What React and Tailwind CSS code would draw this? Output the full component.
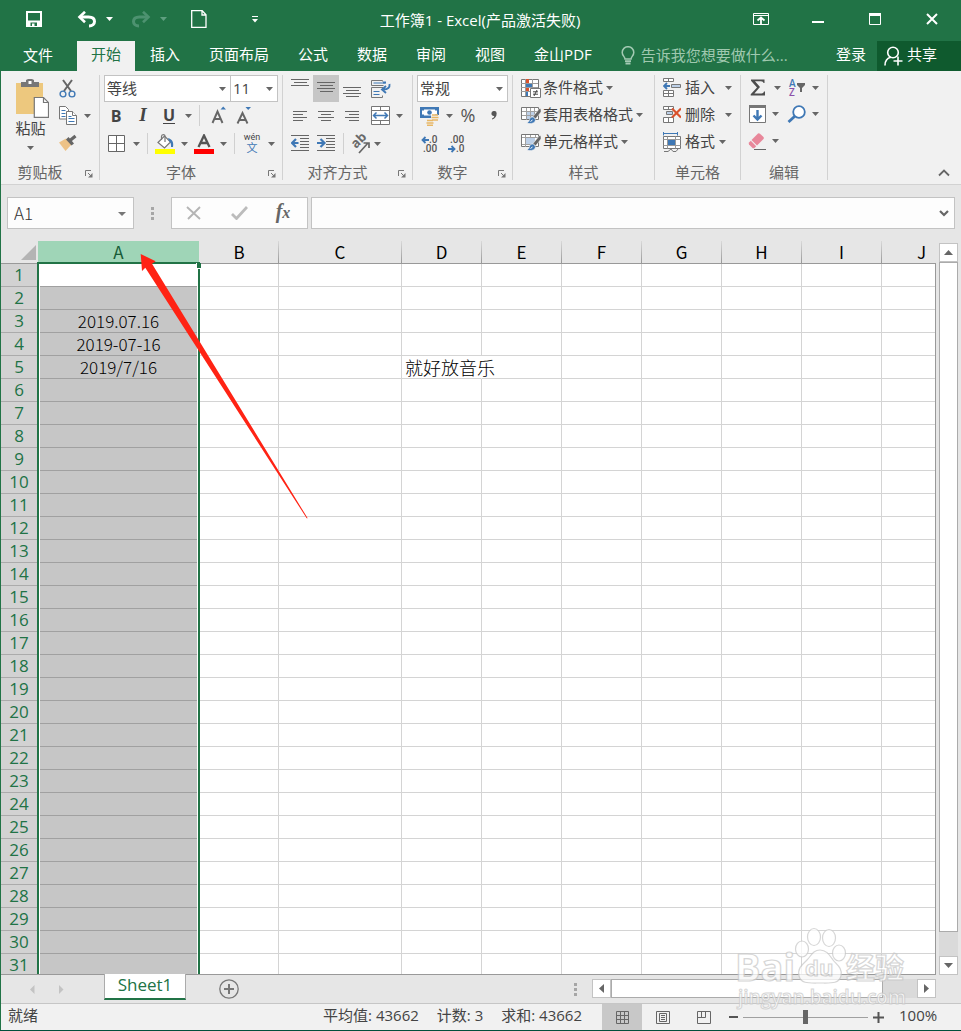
import React from "react";

const UI = "font-['Open_Sans','Noto_Sans_CJK_SC',sans-serif]";

function Caret({ className = "w-4", color = "#666666", label = "更多选项" }) {
  return (
    <button aria-label={label} className={"flex h-full shrink-0 items-center justify-center " + className}>
      <svg width="7" height="4" viewBox="0 0 7 4">
        <path d="M0 0h7L3.5 4z" fill={color} />
      </svg>
    </button>
  );
}

function Tool({ label, className = "w-[26px]", children }) {
  return (
    <button aria-label={label} title={label} className={"flex h-full shrink-0 items-center justify-center " + className}>
      {children}
    </button>
  );
}

function Row({ className = "", children }) {
  return <div className={"flex h-[27px] items-center " + className}>{children}</div>;
}

function Divider({ className = "mx-1" }) {
  return <div className={"h-[21px] w-px shrink-0 bg-[#d0d0d0] " + className} />;
}

function Group({ label, launcher, className, pad = "", children }) {
  return (
    <section aria-label={label} className={"flex shrink-0 flex-col border-r border-[#d2d2d2] " + className}>
      <div className={"h-[81px] " + pad}>{children}</div>
      <div className="flex h-6 items-end">
        <div className="flex-1 text-center text-[15px] leading-4 text-[#666666]">{label}</div>
        {launcher && (
          <button aria-label={label + "设置"} className="flex h-3 w-5 items-center justify-center">
            <svg width="8" height="8" viewBox="0 0 8 8" fill="none" stroke="#777777">
              <path d="M.5 6V.5H6M3 3l3.5 3.5" />
              <path d="M7.5 3v4.5H3z" fill="#777777" stroke="none" />
            </svg>
          </button>
        )}
      </div>
    </section>
  );
}

function Combo({ label, value, className }) {
  return (
    <div className={"relative h-[27px] border border-[#c3c3c3] bg-white " + className}>
      <select aria-label={label} className="h-full w-full appearance-none bg-transparent pl-[2px] text-[15px] text-[#444444]">
        <option>{value}</option>
      </select>
      <svg className="pointer-events-none absolute right-1 top-[11px]" width="7" height="4" viewBox="0 0 7 4">
        <path d="M0 0h7L3.5 4z" fill="#666666" />
      </svg>
    </div>
  );
}

/* Text line icons: each entry is [x1, x2, y] inside an 18 x 27 box. */
function Lines({ lines, children }) {
  return (
    <svg width="18" height="27" viewBox="0 0 18 27">
      {lines.map(([a, b, y]) => (
        <path key={y} d={`M${a} ${y + 0.5}H${b}`} stroke="#666666" />
      ))}
      {children}
    </svg>
  );
}

function TableBrush({ header }) {
  return (
    <svg width="20" height="20" viewBox="0 0 20 20">
      <path d="M.5 2.500h17v12H.5z" fill="#fff" stroke="#777777" />
      {header ? (
        <g>
          <path d="M5 6h9v6H5z" fill="#bdd0e8" />
          <path d="M1 5.500h16M1 12.500h12M4.500 3v3M9.500 3v3M14.500 3v3M4.500 12v3M9.500 12v3M4.500 6v6" stroke="#a0a0a0" fill="none" />
        </g>
      ) : (
        <g>
          <path d="M6 6h8v8H6z" fill="#bdd0e8" />
          <path d="M1 6.500h16M1 10.500h14M5.500 3v12M9.500 3v12M13.500 3v12" stroke="#a0a0a0" fill="none" />
        </g>
      )}
      <path d="M20 4l-1.500-.5-6.500 8 2.500 2.500 5.500-7z" fill="#666666" stroke="#f0f0f0" strokeWidth=".6" />
      <path d="M12.500 12.300c-2-.8-3.700.4-4 2.200-.2 1.600-1 2.800-2.800 3.600 3 .9 6.700.6 8.300-1.600.9-1.400.1-3.300-1.500-4.200z" fill="#3f78b5" stroke="#f0f0f0" strokeWidth=".6" />
      <path d="M9.500 16.500l2-1.500" stroke="#fff" />
    </svg>
  );
}

function TitleBar() {
  return (
    <header className="flex h-[41px] items-center bg-[#217346] text-white">
      <div className="flex h-full min-w-0 flex-1 items-center pb-[3px]">
        <Tool label="保存" className="ml-[18px] w-8">
          <svg width="16" height="16" viewBox="0 0 16 16">
            <path d="M1 1h14v14H1z" fill="none" stroke="#fff" strokeWidth="2" />
            <path d="M1 9.500h14V15H1z" fill="#fff" />
            <path d="M4.500 11.500H11V15H4.500z" fill="#217346" />
            <path d="M6 12.500h2.500V15H6z" fill="#fff" />
          </svg>
        </Tool>
        <Tool label="撤消" className="ml-[21px] w-8">
          <svg width="20" height="17" viewBox="0 0 20 17" fill="none" stroke="#fff">
            <path d="M3 6h8.500c4 0 6 2 6 4.500S15.500 15 12 15" strokeWidth="3" />
            <path d="M8 .8L2.500 6 8 11.200" strokeWidth="2.600" />
          </svg>
        </Tool>
        <Caret className="w-3" color="#ffffff" label="撤消列表" />
        <Tool label="恢复" className="ml-[10px] w-8">
          <svg width="20" height="17" viewBox="0 0 20 17" fill="none" stroke="#4d9270">
            <path d="M17 6H8.500c-4 0-6 2-6 4.500S4.500 15 8 15" strokeWidth="3" />
            <path d="M12 .8L17.500 6 12 11.200" strokeWidth="2.600" />
          </svg>
        </Tool>
        <Caret className="w-3" color="#5f9f80" label="恢复列表" />
        <Tool label="新建" className="ml-[14px] w-8">
          <svg width="16" height="18" viewBox="0 0 16 18" fill="none" stroke="#fff" strokeWidth="1.300">
            <path d="M.7.700h10.500L15 4.700v12.600H.7zM11 1v4h4" />
          </svg>
        </Tool>
        <Tool label="自定义快速访问工具栏" className="ml-6 w-8">
          <svg width="6" height="8" viewBox="0 0 6 8">
            <path d="M0 1.500h6" stroke="#fff" />
            <path d="M0 4h6L3 7.500z" fill="#fff" />
          </svg>
        </Tool>
      </div>
      <h1 className="text-[15px]">工作簿1 - Excel(产品激活失败)</h1>
      <div className="flex h-full flex-1 items-center justify-end pb-[3px] pr-px">
        <Tool label="功能区显示选项" className="w-[57px]">
          <svg width="16" height="12" viewBox="0 0 16 12" fill="none" stroke="#fff">
            <path d="M.5.5h15v11H.5zM0 2.500h16" />
            <path d="M8 11V5M4.500 7.500L8 4.500l3.500 3" strokeWidth="1.800" />
          </svg>
        </Tool>
        <Tool label="最小化" className="w-[57px]">
          <svg width="12" height="12" viewBox="0 0 12 12">
            <path d="M0 8h12v2H0z" fill="#fff" />
          </svg>
        </Tool>
        <Tool label="最大化" className="w-[57px]">
          <svg width="12" height="12" viewBox="0 0 12 12">
            <path d="M.5.5h11v11H.5z" fill="none" stroke="#fff" />
            <path d="M0 0h12v3H0z" fill="#fff" />
          </svg>
        </Tool>
        <Tool label="关闭" className="w-[57px]">
          <svg width="12" height="12" viewBox="0 0 12 12">
            <path d="M1 1l10 10M11 1L1 11" stroke="#fff" strokeWidth="2" />
          </svg>
        </Tool>
      </div>
    </header>
  );
}

const TABS = ["开始", "插入", "页面布局", "公式", "数据", "审阅", "视图", "金山PDF"];

function TabBar() {
  return (
    <nav className="flex h-[30px] items-stretch gap-px overflow-hidden bg-[#217346] text-[15px] text-white">
      <button className="w-[76px] shrink-0 pb-px">文件</button>
      {TABS.map((t, i) => (
        <button key={t} className={"shrink-0 px-[14px] pb-1 " + (i === 0 ? "bg-[#f1f1f1] text-[#217346]" : "")}>
          {t}
        </button>
      ))}
      <label className="ml-[14px] flex min-w-0 flex-1 items-center gap-[6px]">
        <svg className="shrink-0" width="14" height="20" viewBox="0 0 14 20" fill="none" stroke="#a3cab3" strokeWidth="1.500">
          <path d="M4 13c0-2.200-2.800-3.300-2.800-6.500a5.800 5.800 0 0 1 11.600 0C12.800 9.700 10 10.800 10 13z" />
          <path d="M4 15.200h6M4.500 17.500h5" strokeWidth="1.800" />
        </svg>
        <input aria-label="操作说明搜索" placeholder="告诉我您想要做什么..." className="w-full min-w-0 bg-transparent pb-px placeholder:text-[#9fc8af]" />
      </label>
      <button className="w-[50px] shrink-0 pb-1">登录</button>
      <button className="flex w-[84px] shrink-0 items-center gap-1 bg-[#0f5a2e] pb-1 pl-[7px]">
        <svg className="mt-1" width="19" height="20" viewBox="0 0 19 20" fill="none" stroke="#fff" strokeWidth="1.600">
          <circle cx="9" cy="6.500" r="5.300" />
          <path d="M1 19.500c0-4.500 2.500-7.500 6-8.200M9.500 15h9M14 10.500v9" />
        </svg>
        共享
      </button>
    </nav>
  );
}

function Ribbon() {
  return (
    <div className="flex overflow-hidden border-b border-[#d2d2d2] bg-[#f1f1f1] py-1 text-[#444444]">
      <Group label="剪贴板" launcher className="w-[99px]">
        <div className="flex">
          <button className="flex w-[59px] flex-col items-center pt-[3px] text-[15px] leading-5">
            <svg width="36" height="40" viewBox="0 0 36 40">
              <path d="M3 5h27v31H3z" fill="#edc87e" />
              <path d="M8 4h5V2l2-1h4l2 1v2h5v5H8z" fill="#777777" />
              <path d="M15.500 3h3v3h-3z" fill="#fff" />
              <path d="M21.300 19.500h9.200l5 5v14.900H21.300z" fill="#fff" stroke="#777777" strokeWidth="1.200" />
              <path d="M30.500 19.500v5h5" fill="none" stroke="#777777" strokeWidth="1.200" />
            </svg>
            粘贴
            <svg className="mt-2 shrink-0" width="7" height="4" viewBox="0 0 7 4">
              <path d="M0 0h7L3.500 4z" fill="#666666" />
            </svg>
          </button>
          <div>
            <Row>
              <Tool label="剪切" className="w-4">
                <svg className="shrink-0" width="18" height="20" viewBox="0 0 18 20" fill="none">
                  <path d="M4 1l8 11M13 1L5 12" stroke="#666666" strokeWidth="2" />
                  <circle cx="4" cy="15" r="2.900" stroke="#3f78b5" strokeWidth="1.400" />
                  <circle cx="13" cy="15" r="2.900" stroke="#3f78b5" strokeWidth="1.400" />
                </svg>
              </Tool>
            </Row>
            <Row>
              <Tool label="复制" className="w-4">
                <svg className="shrink-0" width="18" height="19" viewBox="0 0 18 19" fill="#fff" stroke="#777777">
                  <path d="M.5.500h6l3 3v9.500h-9z" />
                  <path d="M2.500 4.500h4M2.500 7.500h4M2.500 10.500h4" stroke="#3f78b5" />
                  <path d="M7.500 5.500h6l4 4v9h-10z" />
                  <path d="M13.500 5.500v4h4" />
                  <path d="M9.500 10.500h3M9.500 12.500h6M9.500 15.500h6" stroke="#3f78b5" />
                </svg>
              </Tool>
              <Caret className="w-[22px]" />
            </Row>
            <Row>
              <Tool label="格式刷" className="w-4">
                <svg className="shrink-0" width="18" height="17" viewBox="0 0 18 17">
                  <path d="M0 8.500L7 4.500l5.500 6-6 6.500z" fill="#edc287" />
                  <path d="M7 5.500l2.500-2.500 5.500 6.500-2.500 2z" fill="#666666" />
                  <path d="M11 6.500L16.500 2" stroke="#666666" strokeWidth="3.200" />
                </svg>
              </Tool>
            </Row>
          </div>
        </div>
      </Group>

      <Group label="字体" launcher className="w-[183px]" pad="pl-1">
        <Row>
          <Combo label="字体名称" value="等线" className="w-[127px]" />
          <Combo label="字号" value="11" className="w-[47px] border-l-0" />
        </Row>
        <Row>
          <Tool label="加粗" className="w-6"><b className="text-[16px]">B</b></Tool>
          <Tool label="倾斜" className="w-[30px]"><b className="font-['Liberation_Serif',serif] text-[19px] italic">I</b></Tool>
          <Tool label="下划线" className="w-[22px]"><span className="border-b border-[#444444] text-[16px] font-bold leading-4">U</span></Tool>
          <Caret className="w-4" />
          <Divider className="ml-[3px] mr-[6px]" />
          <Tool label="增大字号">
            <svg width="18" height="20" viewBox="0 0 18 20" fill="none" stroke="#666666">
              <path d="M2.500 17L7.500 5.500l5 11.500M4.500 13h6" strokeWidth="1.900" />
              <path d="M10.500 3.500h5.500L13.200.5z" fill="#3f78b5" stroke="none" />
            </svg>
          </Tool>
          <Tool label="减小字号">
            <svg width="18" height="20" viewBox="0 0 18 20" fill="none" stroke="#666666">
              <path d="M1.500 17.500L6.500 7l5 10.500M3.500 14h6" strokeWidth="1.900" />
              <path d="M9.500 1h5.500L12.200 4z" fill="#3f78b5" stroke="none" />
            </svg>
          </Tool>
        </Row>
        <Row className="pt-[2px]">
          <Tool label="边框" className="w-6">
            <svg width="17" height="17" viewBox="0 0 17 17" fill="#fff" stroke="#666666">
              <path d="M.5.500h16v16H.5zM8.500 0v17M0 8.500h17" />
            </svg>
          </Tool>
          <Caret className="w-4" />
          <Divider className="ml-[3px] mr-[5px]" />
          <Tool label="填充颜色" className="w-6">
            <svg width="22" height="20" viewBox="0 0 22 20">
              <path d="M4 8.500L10.500 2l6 6-6 6z" fill="#fff" stroke="#777777" strokeWidth="1.200" />
              <path d="M7.500 6V2.500Q7.500.6 9.300.6T11 2.500V8" fill="none" stroke="#777777" strokeWidth="1.200" />
              <path d="M14 4c4 1 6 4 5 9h-2c.3-3-.5-5-2-6z" fill="#3f78b5" />
              <path d="M1 15h20v5H1z" fill="#ffff00" />
            </svg>
          </Tool>
          <Caret className="w-[14px]" />
          <Tool label="字体颜色" className="w-[26px]">
            <svg width="20" height="20" viewBox="0 0 20 20">
              <path d="M4.500 13L10 1.500 15.500 13M6.500 9h7" fill="none" stroke="#555555" strokeWidth="2.300" />
              <path d="M0 15h20v5H0z" fill="#ff0000" />
            </svg>
          </Tool>
          <Caret className="w-3" />
          <Divider className="mx-[5px]" />
          <Tool label="显示拼音" className="w-6 flex-col">
            <span className="font-['Roboto',sans-serif] text-[9px] leading-[9px]">wén</span>
            <span className="text-[11px] leading-[12px] text-[#3f78b5]">文</span>
          </Tool>
          <Caret className="w-[14px]" />
        </Row>
      </Group>

      <Group label="对齐方式" launcher className="w-[130px]" pad="pl-1">
        <Row>
          <Tool label="顶端对齐"><Lines lines={[[0, 18, 4], [3, 16, 7], [0, 18, 10]]} /></Tool>
          <Tool label="垂直居中" className="w-[26px] bg-[#c6c6c6]"><Lines lines={[[0, 18, 7], [3, 16, 10], [0, 18, 13], [3, 16, 16]]} /></Tool>
          <Tool label="底端对齐"><Lines lines={[[0, 18, 12], [3, 16, 15], [0, 18, 18], [3, 16, 21]]} /></Tool>
          <Tool label="自动换行" className="w-8">
            <svg width="20" height="20" viewBox="0 0 20 20" fill="none" stroke="#777777">
              <path d="M11.500 2.500V1.500H.5v5h12M12 8.500H.5v10h11v-2" />
              <path d="M2.500 4h12M2.500 12.500h6M2.500 15.500h6" stroke="#3f78b5" />
              <path d="M12 3.500h3M18.500 5c.5 3.500-1.500 5.500-6 5.500M15 7l-4 3.500 4 3.500" stroke="#3f78b5" strokeWidth="1.900" />
            </svg>
          </Tool>
        </Row>
        <Row>
          <Tool label="左对齐"><Lines lines={[[2, 16, 9], [2, 12, 12], [2, 16, 15], [2, 12, 18]]} /></Tool>
          <Tool label="居中"><Lines lines={[[1, 17, 9], [4, 14, 12], [1, 17, 15], [4, 14, 18]]} /></Tool>
          <Tool label="右对齐"><Lines lines={[[2, 16, 9], [6, 16, 12], [2, 16, 15], [6, 16, 18]]} /></Tool>
          <Tool label="合并后居中" className="w-[30px]">
            <svg width="19" height="19" viewBox="0 0 19 19" fill="#fff" stroke="#777777">
              <path d="M.5.500h18v18H.5zM0 4.500h19M0 14.500h19M9.500 0v4.500M9.500 14.500V19" />
              <path d="M3 9.500h13M5.500 6.500l-3 3 3 3M13.500 6.500l3 3-3 3" fill="none" stroke="#3f78b5" strokeWidth="1.500" />
            </svg>
          </Tool>
          <Caret className="w-2" />
        </Row>
        <Row className="pt-[2px]">
          <Tool label="减少缩进量">
            <Lines lines={[[0, 18, 5], [9, 18, 8], [9, 18, 11], [9, 18, 14], [9, 18, 17], [0, 18, 20]]}>
              <path d="M7.500 13H2M5 9l-4 4 4 4" fill="none" stroke="#3f78b5" strokeWidth="2.200" />
            </Lines>
          </Tool>
          <Tool label="增加缩进量">
            <Lines lines={[[0, 18, 5], [9, 18, 8], [9, 18, 11], [9, 18, 14], [9, 18, 17], [0, 18, 20]]}>
              <path d="M0 13h6M3.500 9l4 4-4 4" fill="none" stroke="#3f78b5" strokeWidth="2.200" />
            </Lines>
          </Tool>
          <Divider className="mx-1" />
          <Tool label="方向" className="w-6">
            <svg className="overflow-visible" width="20" height="20" viewBox="0 0 20 20">
              <text transform="translate(6 15) rotate(-45)" fontSize="13" fontWeight="700" fill="#6a6a6a" fontFamily="Open Sans">ab</text>
              <path d="M9 19l9-10M13.500 9H19v5" fill="none" stroke="#666666" strokeWidth="1.700" />
            </svg>
          </Tool>
          <Caret className="w-[10px]" />
        </Row>
      </Group>

      <Group label="数字" launcher className="w-[100px]" pad="pl-1">
        <Row>
          <Combo label="数字格式" value="常规" className="w-[91px]" />
        </Row>
        <Row>
          <Tool label="会计数字格式">
            <svg width="20" height="20" viewBox="0 0 20 20">
              <path d="M0 1h19v11H0z" fill="#3f78b5" />
              <path d="M2 4.500h2v-1h11v1h2v4h-2v1H4v-1H2z" fill="#fff" />
              <circle cx="9.500" cy="6.500" r="2.300" fill="#3f78b5" />
              <path d="M11 9h8v8h-6v3H6v-7h5z" fill="#f1f1f1" />
              <path d="M12 9h6M11.500 11.500h7M12 14h6M7 14.500h6M6.500 17h7M7 19.300h6" stroke="#e8b765" strokeWidth="1.700" />
            </svg>
          </Tool>
          <Caret className="w-3" />
          <Tool label="百分比样式"><span className="text-[18px] text-[#555555]">%</span></Tool>
          <Tool label="千位分隔样式">
            <svg width="6" height="9" viewBox="0 0 6 9">
              <path d="M3 0a2.500 2.500 0 0 1 2.600 2.800C5.600 5.500 4 7.800 1 8.500V7.500C2.600 7 3.200 6 3.200 5 1.500 5.200.4 4 .4 2.600A2.500 2.500 0 0 1 3 0z" fill="#555555" />
            </svg>
          </Tool>
        </Row>
        <Row className="pt-[2px]">
          <Tool label="增加小数位数">
            <svg width="18" height="18" viewBox="0 0 18 18" fontFamily="Roboto" fontSize="10" fontWeight="500" fill="#555555">
              <path d="M8 5H2M4.500 2L1.500 5l3 3" stroke="#3f78b5" strokeWidth="1.800" fill="none" />
              <text x="8" y="8">.0</text>
              <text x="2" y="17">.00</text>
            </svg>
          </Tool>
          <Tool label="减少小数位数">
            <svg width="18" height="18" viewBox="0 0 18 18" fontFamily="Roboto" fontSize="10" fontWeight="500" fill="#555555">
              <text x="3" y="8">.00</text>
              <path d="M1 14h6M4.500 11l3 3-3 3" stroke="#3f78b5" strokeWidth="1.800" fill="none" />
              <text x="9" y="17">.0</text>
            </svg>
          </Tool>
        </Row>
      </Group>

      <Group label="样式" className="w-[142px] text-[15px]" pad="pl-2">
        <Row className="pb-[2px]">
          <button className="flex items-center gap-[2px]">
            <svg width="20" height="20" viewBox="0 0 20 20">
              <path d="M.5 1.500h17v17H.5z" fill="#fff" stroke="#777777" />
              <path d="M5 1h3v4H5zM5 9h3v4H5z" fill="#d9512c" />
              <path d="M5 5h6v4H5zM5 13h2v5H5z" fill="#3f78b5" />
              <path d="M0 5.500h17M0 9.500h17M0 13.500h17M4.500 1v17M11.500 1v17" stroke="#9a9a9a" fill="none" />
              <path d="M9.500 10.500h10v9h-10z" fill="#fff" stroke="#777777" />
              <path d="M12 13.800h5M12 16.200h5M16 12l-3 6" stroke="#444444" fill="none" />
            </svg>
            条件格式
          </button>
          <Caret className="w-[13px]" />
        </Row>
        <Row className="pb-[2px]">
          <button className="flex items-center gap-[2px]"><TableBrush />套用表格格式</button>
          <Caret className="w-[13px]" />
        </Row>
        <Row className="pb-[2px]">
          <button className="flex items-center gap-[2px]"><TableBrush header />单元格样式</button>
          <Caret className="w-[13px]" />
        </Row>
      </Group>

      <Group label="单元格" className="w-[86px] text-[15px]" pad="pl-2">
        <Row className="pb-[2px]">
          <button className="flex items-center gap-1">
            <svg width="18" height="19" viewBox="0 0 18 19" fill="#fff" stroke="#777777">
              <path d="M.5.500h10v3H.5zM5.500.500v3M.5 12.500h10v6H.5zM.5 15.500h10M5.500 12.500v6" />
              <path d="M8.500 6.500h9v3h-9z" fill="#bdd0e8" />
              <path d="M7 8H2M4 5L1 8l3 3" stroke="#3f78b5" strokeWidth="1.900" fill="none" />
            </svg>
            插入
          </button>
          <Caret className="w-[26px]" />
        </Row>
        <Row className="pb-[2px]">
          <button className="flex items-center gap-1">
            <svg width="18" height="19" viewBox="0 0 18 19" fill="#fff" stroke="#777777">
              <path d="M.5 1.500h10v3H.5zM5.500 1.500v3M.5 12.500h10v5H.5zM5.500 12.500v5" />
              <path d="M3.500 6.500h6v3h-6z" fill="#bdd0e8" />
              <path d="M9 3.500l9 9M18 3.500l-9 9" stroke="#d9512c" strokeWidth="2.200" />
            </svg>
            删除
          </button>
          <Caret className="w-[26px]" />
        </Row>
        <Row className="pb-[2px]">
          <button className="flex items-center gap-1">
            <svg width="18" height="20" viewBox="0 0 18 20" fill="#fff" stroke="#777777">
              <path d="M1 1.500h13M.5 0v3.500M14.500 0v3.500" stroke="#3f78b5" />
              <path d="M.5 4.500h17v12h-17z" />
              <path d="M.5 7.500h17M.5 13.500h17M4.500 4.500v12M12.500 4.500v12" stroke="#9a9a9a" />
              <path d="M5 8h7v5H5z" fill="#3f78b5" stroke="none" />
              <path d="M1 19.500h4l3-2.500 2 2.500h3l2-2.500" fill="none" />
            </svg>
            格式
          </button>
          <Caret className="w-[14px]" />
        </Row>
      </Group>

      <Group label="编辑" className="w-[87px]" pad="pl-1">
        <Row className="pb-[2px]">
          <Tool label="自动求和">
            <svg width="16" height="17" viewBox="0 0 16 17">
              <path d="M1 .500h13.500V4h-1Q13.300 2.300 11 2.300H5l5 5.700-5.600 6.400H11.500Q13.700 14.400 14 12.400h1v4.100H.7v-1.200L7 8.500 1 1.800z" fill="#4d4d4d" />
            </svg>
          </Tool>
          <Caret className="w-3" />
          <Tool label="排序和筛选" className="w-7">
            <svg width="18" height="18" viewBox="0 0 18 18" fontFamily="Open Sans" fontSize="10" fontWeight="600">
              <text x="1" y="8" fill="#3f78b5">A</text>
              <text x="1" y="17" fill="#8b4fa8">Z</text>
              <path d="M9 4h8v2l-3 3v4h-2V9L9 6z" fill="#666666" />
            </svg>
          </Tool>
          <Caret className="w-2" />
        </Row>
        <Row className="pb-[3px]">
          <Tool label="填充" className="w-6">
            <svg width="17" height="18" viewBox="0 0 17 18">
              <path d="M.5.500h16v17H.5z" fill="#fff" stroke="#777777" />
              <path d="M0 0h17v3H0z" fill="#777777" />
              <path d="M8.500 5v9M4.500 10.500l4 4 4-4" fill="none" stroke="#3f78b5" strokeWidth="2.400" />
            </svg>
          </Tool>
          <Caret className="w-3" />
          <Tool label="查找和选择" className="w-[30px]">
            <svg width="19" height="18" viewBox="0 0 19 18" fill="none" stroke="#3f78b5">
              <circle cx="12" cy="7" r="5.800" fill="#fff" strokeWidth="1.800" />
              <path d="M7.800 11.200L1.500 17" strokeWidth="2.800" />
            </svg>
          </Tool>
          <Caret className="w-2" />
        </Row>
        <Row className="pb-[3px]">
          <Tool label="清除" className="w-6">
            <svg width="18" height="17" viewBox="0 0 18 17">
              <path d="M10 .500Q11 0 12 .800L15.500 4Q16.200 5 15.500 6L9 12.500 3.500 7z" fill="#e8879a" />
              <path d="M2.800 7.800l5.400 5.400-1.700 1.800Q5.500 15.600 4.500 15L1 11.500Q.400 10.500 1 9.600z" fill="#e8879a" />
              <path d="M6 16.500h12" stroke="#666666" />
            </svg>
          </Tool>
          <Caret className="w-3" />
        </Row>
      </Group>

      <div className="flex flex-1 items-end justify-end pb-[3px] pr-[11px]">
        <button aria-label="折叠功能区">
          <svg width="12" height="8" viewBox="0 0 12 8">
            <path d="M1 6.500l5-5 5 5" fill="none" stroke="#666666" strokeWidth="1.800" />
          </svg>
        </button>
      </div>
    </div>
  );
}

function Dots() {
  return (
    <svg width="3" height="13" viewBox="0 0 3 13" fill="#a6a6a6">
      <path d="M0 0h3v3H0zM0 5h3v3H0zM0 10h3v3H0z" />
    </svg>
  );
}

function FormulaBar() {
  return (
    <div className="flex items-center px-[6px] py-3">
      <div className="relative h-8 w-[127px] border border-[#c3c3c3] bg-[#fdfdfd]">
        <input aria-label="名称框" defaultValue="A1" className="h-full w-full bg-transparent pb-[2px] pl-[6px] font-['Noto_Sans_CJK_SC',sans-serif] text-[17px] font-light text-[#333333]" />
        <svg className="absolute right-[7px] top-[14px]" width="8" height="4" viewBox="0 0 8 4">
          <path d="M0 0h8L4 4z" fill="#777777" />
        </svg>
      </div>
      <div className="flex w-[37px] justify-center"><Dots /></div>
      <div className="flex h-8 w-[137px] items-center border border-[#c3c3c3] bg-[#fdfdfd]">
        <Tool label="取消" className="w-11">
          <svg width="16" height="14" viewBox="0 0 16 14"><path d="M1 1l13 12M14 1L2 13" stroke="#b5b5b5" strokeWidth="1.900" /></svg>
        </Tool>
        <Tool label="输入" className="w-[46px]">
          <svg width="17" height="14" viewBox="0 0 17 14" fill="none"><path d="M1 8l4.500 4.500L16 1" stroke="#bcbcbc" strokeWidth="2.800" /></svg>
        </Tool>
        <Tool label="插入函数" className="w-[42px] pb-1">
          <i className="font-['Liberation_Serif',serif] text-[20px] font-bold text-[#666666]">f<span className="text-[16px]">x</span></i>
        </Tool>
      </div>
      <div className="ml-[3px] flex h-8 flex-1 items-center border border-[#c3c3c3] bg-[#fdfdfd] pr-[5px]">
        <input aria-label="编辑栏" className="h-full min-w-0 flex-1 bg-transparent px-2 text-[16px]" />
        <button aria-label="展开编辑栏">
          <svg width="10" height="7" viewBox="0 0 10 7"><path d="M1 1l4 4 4-4" fill="none" stroke="#666666" strokeWidth="2.200" /></svg>
        </button>
      </div>
    </div>
  );
}

const COLUMNS = ["B", "C", "D", "E", "F", "G", "H", "I", "J"];
const ROWS = Array.from({ length: 31 }, (_, i) => i + 1);
const COL_A = { 3: "2019.07.16", 4: "2019-07-16", 5: "2019/7/16" };

function Grid() {
  return (
    <div className="relative min-w-0 flex-1 overflow-hidden border-b border-[#999999]">
      <table className="w-[961px] table-fixed border-separate border-spacing-0">
        <colgroup>
          <col className="w-[36px]" />
          <col className="w-[163px]" />
          <col className="w-[79px]" />
          <col className="w-[123px]" />
          {COLUMNS.slice(2).map((c) => <col key={c} className="w-[80px]" />)}
        </colgroup>
        <thead>
          <tr className="h-[23px] font-['Noto_Sans_CJK_SC',sans-serif] text-[17px] leading-[22px] text-black">
            <th aria-label="全选" className="border-b border-[#999999] p-0">
              <svg className="ml-auto mr-px" width="15" height="15" viewBox="0 0 15 15"><path d="M15 0v15H0z" fill="#b4b4b4" /></svg>
            </th>
            <th scope="col" className="border-b-2 border-[#217346] p-0 font-normal">
              <div className="mx-px h-[21px] bg-[#9fd5b7] text-[#185c37]">A</div>
            </th>
            {COLUMNS.map((c) => (
              <th key={c} scope="col" className="border-b border-[#999999] p-0 font-normal">
                <div className="flex h-[22px]">
                  <span className="flex-1">{c}</span>
                  <span className="w-px bg-linear-to-b from-[#d9d9d9] to-[#999999]" />
                </div>
              </th>
            ))}
          </tr>
        </thead>
        <tbody className="bg-white">
          {ROWS.map((r) => (
            <tr key={r} className="h-[23px] leading-[22px]">
              <th scope="row" className="border-b border-[#ababab] bg-[#d2d2d2] p-0 text-[17px] font-normal text-[#217346]">{r}</th>
              <td className="border-x-2 border-[#217346] p-0 text-center font-['Noto_Sans_CJK_SC',sans-serif] text-[17px] font-light text-black">
                <div className={"mx-px h-[23px] border-b border-[#a0a0a0] " + (r === 1 ? "bg-white" : "bg-[#c6c6c6]")}>{COL_A[r]}</div>
              </td>
              {COLUMNS.map((c) => (
                <td key={c} className={"border-b border-r p-0 " + (r === 5 && c === "D" ? "border-b-[#d4d4d4] border-r-transparent" : "border-[#d4d4d4]")}>
                  {r === 5 && c === "D" && <div className="h-[22px] pl-[3px] font-['Noto_Sans_CJK_SC',sans-serif] text-[18px] font-light text-black">就好放音乐</div>}
                </td>
              ))}
            </tr>
          ))}
        </tbody>
      </table>
      <div className="absolute bottom-0 right-0 top-[23px] w-px bg-[#999999]" />
      <div className="absolute left-[195px] top-[22px] h-[6px] w-[5px] border-b border-l border-white bg-[#217346]" />
      <svg className="pointer-events-none absolute left-[137px] top-[11px]" width="172" height="268" viewBox="0 0 172 268">
        <path d="M2.700 2L17.700 9.300L14 11.700L169.700 266.300L168.700 266.300L7.300 15.700L4 19z" fill="#ff2314" />
      </svg>
    </div>
  );
}

function Arrow({ d, color = "#666666" }) {
  return (
    <svg width="9" height="9" viewBox="0 0 9 9"><path d={d} fill={color} /></svg>
  );
}

function VerticalScroll() {
  return (
    <div className="mx-[3px] mt-[2px] flex w-[19px] flex-col bg-[#dadada]">
      <button aria-label="向上滚动" className="flex h-[19px] items-center justify-center border border-[#c3c3c3] bg-white"><Arrow d="M0 7h9L4.500 2z" /></button>
      <div className="flex-[670] border border-[#ababab] bg-white" />
      <div className="flex-[24]" />
      <button aria-label="向下滚动" className="flex h-[19px] items-center justify-center border border-[#c3c3c3] bg-white"><Arrow d="M0 2h9L4.500 7z" /></button>
    </div>
  );
}

function SheetBar() {
  return (
    <div className="flex h-7 items-start">
      <Tool label="上一个工作表" className="ml-[17px] w-7"><Arrow d="M6.500 0v9L2 4.500z" color="#c3c3c3" /></Tool>
      <Tool label="下一个工作表" className="w-7"><Arrow d="M3 0v9l4.500-4.500z" color="#c3c3c3" /></Tool>
      <button className="relative -mt-px ml-[30px] h-[26px] w-[82px] border-x border-b-2 border-x-[#ababab] border-b-[#217346] bg-white pb-[2px] text-[17px] leading-5 text-[#217346]">Sheet1</button>
      <Tool label="新建工作表" className="ml-[30px] w-[26px]">
        <svg width="20" height="20" viewBox="0 0 20 20" fill="none" stroke="#777777">
          <circle cx="10" cy="10" r="9.200" strokeWidth="1.300" />
          <path d="M5 10h10M10 5v10" strokeWidth="2" />
        </svg>
      </Tool>
      <div className="flex h-full flex-1 items-center justify-end pr-[15px]"><Dots /></div>
      <div className="mr-[25px] mt-1 flex h-[19px] w-[344px] bg-[#dadada]">
        <button aria-label="向左滚动" className="flex w-[19px] items-center justify-center border border-[#c3c3c3] bg-white"><Arrow d="M7 0v9L2 4.500z" /></button>
        <div className="w-[272px] border border-[#ababab] bg-white" />
        <div className="flex-1" />
        <button aria-label="向右滚动" className="flex w-[19px] items-center justify-center border border-[#c3c3c3] bg-white"><Arrow d="M2 0v9l5-4.500z" /></button>
      </div>
    </div>
  );
}

function StatusBar() {
  return (
    <footer className="flex h-[27px] items-stretch border-t border-[#c6c6c6] bg-[#f1f1f1] text-[15px] leading-[22px] text-[#444444]">
      <span className="pl-[7px]">就绪</span>
      <div className="flex flex-1 justify-end gap-[18px] pr-5">
        <span>平均值: 43662</span>
        <span>计数: 3</span>
        <span>求和: 43662</span>
      </div>
      <Tool label="普通" className="w-10 bg-[#c8c8c8]">
        <svg width="13" height="13" viewBox="0 0 13 13" fill="none" stroke="#666666"><path d="M.5.500h12v12H.5zM4.500 0v13M8.500 0v13M0 4.500h13M0 8.500h13" /></svg>
      </Tool>
      <Tool label="页面布局视图" className="w-[41px]">
        <svg width="14" height="13" viewBox="0 0 14 13" fill="none" stroke="#666666"><path d="M.5.500h13v12H.5zM3.500 2.500h7v8h-7zM5 4.500h4M5 6.500h4M5 8.500h4" /></svg>
      </Tool>
      <Tool label="分页预览" className="w-[42px]">
        <svg width="14" height="13" viewBox="0 0 14 13" fill="none" stroke="#666666"><path d="M.5.500h13v12H.5zM4.500 0v6.500M0 6.500h8.500V0" /></svg>
      </Tool>
      <Tool label="缩小" className="w-[18px]">
        <svg width="10" height="10" viewBox="0 0 10 10"><path d="M0 4h9v2H0z" fill="#555555" /></svg>
      </Tool>
      <input
        type="range"
        aria-label="显示比例"
        defaultValue="50"
        className="w-[125px] appearance-none bg-[linear-gradient(#a0a0a0,#a0a0a0)] bg-[length:100%_1px] bg-center bg-no-repeat [&::-webkit-slider-thumb]:h-[14px] [&::-webkit-slider-thumb]:w-[5px] [&::-webkit-slider-thumb]:appearance-none [&::-webkit-slider-thumb]:bg-[#666666]"
      />
      <Tool label="放大" className="w-5">
        <svg width="11" height="11" viewBox="0 0 11 11"><path d="M0 5.500h11M5.500 0v11" stroke="#555555" strokeWidth="2" /></svg>
      </Tool>
      <button className="w-[73px] pb-1 pl-[11px] text-left">100%</button>
    </footer>
  );
}

function Watermark() {
  return (
    <svg className="pointer-events-none absolute bottom-[15px] right-[46px] opacity-75" width="190" height="95" viewBox="0 0 190 95" fill="#ffffff" stroke="#c9c9c9" strokeWidth="1.200">
      <g fontFamily="Open Sans, Noto Sans CJK SC, sans-serif" fontWeight="700">
        <text x="10" y="61" fontSize="38">Bai</text>
        <ellipse cx="77" cy="29" rx="6.500" ry="8" />
        <ellipse cx="89" cy="17" rx="6.500" ry="8.500" />
        <ellipse cx="104" cy="18" rx="6.500" ry="8.500" />
        <ellipse cx="114" cy="33" rx="6.500" ry="8" />
        <path d="M95 30c-7 0-9 6-13 10s-10 8-8 16 10 7 21 7 19 1 21-7-5-12-8-16-6-10-13-10z" />
        <text x="80" y="56" fontSize="22">du</text>
        <text x="121" y="59" fontSize="29">经验</text>
      </g>
      <text x="13" y="84" fontSize="19" fontFamily="Open Sans, sans-serif" fontWeight="600" strokeWidth="1">jingyan.baidu.com</text>
    </svg>
  );
}

export default function App() {
  return (
    <div className={"relative flex h-screen flex-col overflow-hidden whitespace-nowrap border-b border-b-[#00503c] bg-[#e6e6e6] " + UI}>
      <TitleBar />
      <TabBar />
      <div className="flex min-h-0 flex-1 flex-col border-l border-[#217346]">
        <Ribbon />
        <FormulaBar />
        <main className="flex min-h-0 flex-1">
          <Grid />
          <VerticalScroll />
        </main>
        <SheetBar />
        <StatusBar />
      </div>
      <Watermark />
    </div>
  );
}
